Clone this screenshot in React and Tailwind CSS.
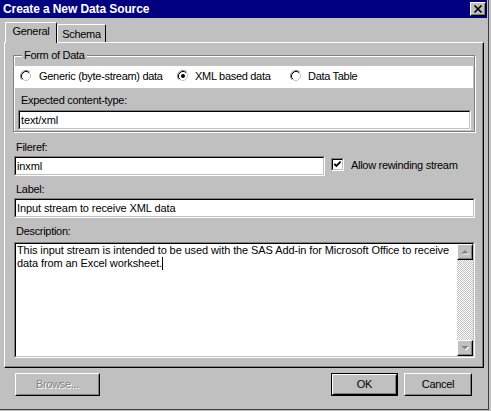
const face = "font-['Liberation_Sans',Arial,sans-serif]";

function Sunken({ className = '', children }) {
  return (
    <div className={`border border-t-[#808080] border-l-[#808080] border-r-white border-b-white ${className}`}>
      <div className="h-full border border-t-black border-l-black border-r-[#c0c0c0] border-b-[#c0c0c0] bg-white flex">
        {children}
      </div>
    </div>
  );
}

function Raised({ className = '', children }) {
  return (
    <div className={`border border-t-white border-l-white border-r-black border-b-black bg-[#c0c0c0] ${className}`}>
      <div className="h-full border border-t-[#c0c0c0] border-l-[#c0c0c0] border-r-[#808080] border-b-[#808080] flex items-center justify-center">
        {children}
      </div>
    </div>
  );
}

function Radio({ on }) {
  return (
    <svg width="12" height="12" viewBox="0 0 12 12" className="shrink-0">
      <circle cx="6" cy="6" r="4.5" fill="#fff" />
      <path d="M2.11 9.89A5.5 5.5 0 0 1 9.89 2.11" fill="none" stroke="#808080" />
      <path d="M9.89 2.11A5.5 5.5 0 0 1 2.11 9.89" fill="none" stroke="#fff" />
      <path d="M2.82 9.18A4.5 4.5 0 0 1 9.18 2.82" fill="none" stroke="#000" />
      <path d="M9.18 2.82A4.5 4.5 0 0 1 2.82 9.18" fill="none" stroke="#c0c0c0" />
      {on && <circle cx="6" cy="6" r="2" fill="#000" />}
    </svg>
  );
}

function Arrow({ down }) {
  const pts = down ? '4.5,6 11.5,6 8,9.5' : '4.5,9.5 11.5,9.5 8,6';
  const sh = down ? '5.5,7 12.5,7 9,10.5' : '5.5,10.5 12.5,10.5 9,7';
  return (
    <svg width="12" height="12" viewBox="2 2 12 12">
      <polygon points={sh} fill="#fff" />
      <polygon points={pts} fill="#808080" />
    </svg>
  );
}

export default function App() {
  return (
    <div className={`w-[491px] h-[411px] overflow-hidden bg-[#c0c0c0] text-black text-[11px] leading-[13px] tracking-[-0.3px] ${face}`}>
      <div className="w-[489px] h-[410px] border-r border-b border-[#404040]">

        {/* Title bar */}
        <div className="w-[487px] h-[18px] bg-[#000080] flex items-center justify-between pl-[3px] pr-[1px]">
          <span className="text-white font-bold text-[12px] leading-[18px] tracking-[-0.1px]">Create a New Data Source</span>
          <Raised className="w-[16px] h-[14px]">
            <svg width="12" height="10" viewBox="0 0 12 10">
              <path d="M2.5 1.5L9.5 8.5M9.5 1.5L2.5 8.5" stroke="#000" strokeWidth="1.7" />
            </svg>
          </Raised>
        </div>

        <div className="pl-[4px] pt-[4px]">
          {/* Tabs */}
          <div className="flex items-end h-[20px]">
            <div className="relative z-10 ml-[1px] w-[52px] h-[21px] -mb-px bg-[#c0c0c0] border-t border-l border-r border-t-white border-l-white border-r-black rounded-t-[2px] text-center pt-[2px]">
              General
            </div>
            <div className="w-[49px] h-[18px] border-t border-l border-r border-t-white border-l-white border-r-black rounded-t-[2px] text-center pt-[3px]">
              Schema
            </div>
          </div>

          {/* Panel */}
          <div className="w-[480px] h-[326px] border border-t-white border-l-white border-r-black border-b-black">
            <div className="h-full flex flex-col border-r border-b border-r-[#808080] border-b-[#808080]">

              {/* Form of Data */}
              <div className="relative ml-[8px] mt-[12px] w-[462px] border border-[#808080] shadow-[1px_1px_0_#fff,inset_1px_1px_0_#fff] pb-[1px] flex flex-col">
                <span className="absolute left-[8px] top-[-7px] bg-[#c0c0c0] px-[2px]">Form of Data</span>
                <div className="mx-[1px] mt-[10px] h-[22px] bg-white flex items-start pt-[4px] pl-[5px]">
                  <div className="w-[157px] flex gap-[7px]"><Radio /><span>Generic (byte-stream) data</span></div>
                  <div className="w-[113px] flex gap-[6px]"><Radio on /><span>XML based data</span></div>
                  <div className="flex gap-[6px]"><Radio /><span>Data Table</span></div>
                </div>
                <div className="mt-[6px] pl-[7px]">Expected content-type:</div>
                <Sunken className="mt-[3px] ml-[4px] w-[453px] h-[20px]">
                  <div className="flex items-center pl-[1px] tracking-[-0.1px]">text/xml</div>
                </Sunken>
              </div>

              {/* Fields */}
              <div className="ml-[9px] flex flex-col">
                <div className="mt-[9px] pl-[2px]">Fileref:</div>
                <div className="mt-[2px] flex items-start">
                  <Sunken className="w-[311px] h-[20px]">
                    <div className="flex items-center pl-[1px] tracking-[-0.1px]">inxml</div>
                  </Sunken>
                  <Sunken className="ml-[6px] mt-[2px] w-[13px] h-[13px]">
                    <svg width="9" height="9" viewBox="0 0 9 9">
                      <path d="M1.3 3.8L3.4 5.9L7.6 1.7" stroke="#000" strokeWidth="1.8" fill="none" />
                    </svg>
                  </Sunken>
                  <span className="ml-[7px] mt-[3px]">Allow rewinding stream</span>
                </div>

                <div className="mt-[7px] pl-[2px]">Label:</div>
                <Sunken className="mt-[2px] w-[461px] h-[20px]">
                  <div className="flex items-center pl-[1px] tracking-[-0.1px]">Input stream to receive XML data</div>
                </Sunken>

                <div className="mt-[7px] pl-[2px]">Description:</div>
                <Sunken className="mt-[4px] w-[461px] h-[116px]">
                  <div className="flex-1 pl-[1px] whitespace-nowrap overflow-hidden tracking-[-0.1px]">
                    This input stream is intended to be used with the SAS Add-in for Microsoft Office to receive
                    <br />
                    data from an Excel worksheet.<span className="inline-block w-px h-[13px] bg-black align-top" />
                  </div>
                  <div className="w-[16px] flex flex-col">
                    <Raised className="w-[16px] h-[16px]"><Arrow /></Raised>
                    <div className="flex-1 bg-[repeating-conic-gradient(#c0c0c0_0%_25%,#ffffff_0%_50%)] bg-[length:2px_2px]" />
                    <Raised className="w-[16px] h-[16px]"><Arrow down /></Raised>
                  </div>
                </Sunken>
              </div>
            </div>
          </div>

          {/* Buttons */}
          <div className="mt-[5px] flex">
            <Raised className="ml-[11px] w-[85px] h-[23px]">
              <span className="text-[#808080] [text-shadow:1px_1px_0_#fff]">Browse...</span>
            </Raised>
            <div className="ml-[231px] border border-black">
              <Raised className="w-[65px] h-[21px]"><span>OK</span></Raised>
            </div>
            <Raised className="ml-[6px] w-[68px] h-[23px]"><span>Cancel</span></Raised>
          </div>
        </div>
      </div>
    </div>
  );
}
